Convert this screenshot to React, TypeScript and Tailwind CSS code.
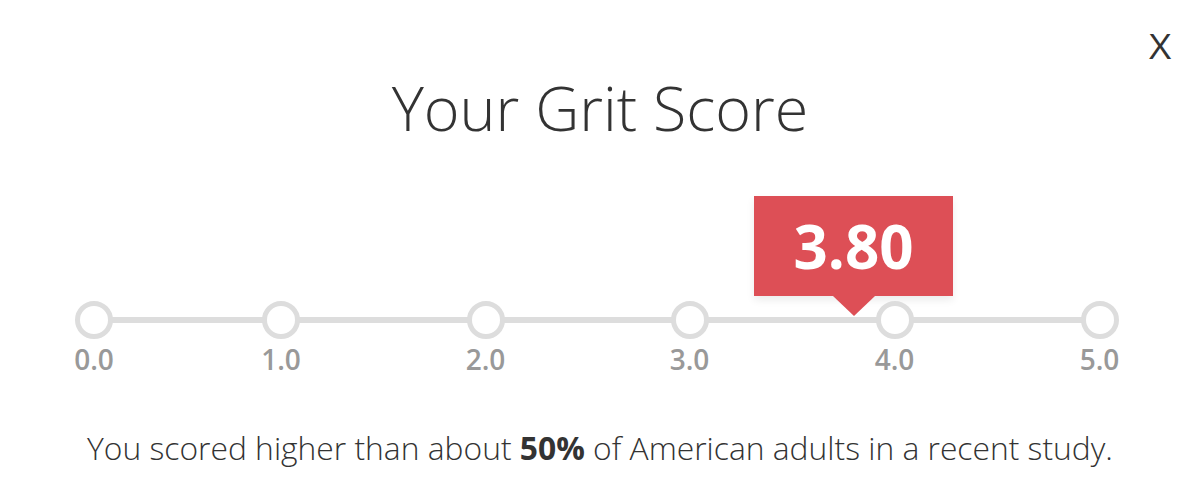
import React from 'react'

const ticks = [
  { label: '0.0', x: 19 },
  { label: '1.0', x: 206 },
  { label: '2.0', x: 410.5 },
  { label: '3.0', x: 614.5 },
  { label: '4.0', x: 819.5 },
  { label: '5.0', x: 1024.5 },
]

const Tick = ({ label, x }: { label: string; x: number }) => (
  <div
    className="absolute top-0 flex w-[80px] -translate-x-1/2 flex-col items-center"
    style={{ left: x }}
  >
    <div className="h-[38px] w-[38px] rounded-full border-[5px] border-[#dddddd] bg-white" />
    <span className="mt-[6px] text-[28px] font-semibold leading-none text-[#999999]">
      {label}
    </span>
  </div>
)

const ScoreBadge = ({ score }: { score: string }) => (
  <div className="absolute left-[679px] top-0 flex flex-col items-center">
    <div className="flex h-[100px] w-[199px] items-center justify-center bg-[#dd4f56] shadow-[0_4px_8px_rgba(0,0,0,0.08)]">
      <span className="text-[60px] font-bold leading-none text-white">{score}</span>
    </div>
    <div className="h-0 w-0 border-x-[21px] border-t-[20px] border-x-transparent border-t-[#dd4f56]" />
  </div>
)

export default function App() {
  return (
    <div
      className="relative h-[498px] w-[1200px] overflow-hidden bg-white text-[#333333]"
      style={{ fontFamily: '"Open Sans", "Noto Sans", sans-serif' }}
    >
      <button className="absolute right-[30px] top-[28px] scale-x-110 text-[35px] font-normal leading-none text-[#333333]">
        X
      </button>

      <h1 className="pt-[77px] text-center text-[61px] font-light leading-none">
        Your Grit Score
      </h1>

      <div className="relative ml-[75px] mt-[58px] h-[190px] w-[1044px]">
        <ScoreBadge score="3.80" />
        <div className="absolute left-[19px] right-[19px] top-[121px] h-[6px] bg-[#dddddd]" />
        <div className="absolute left-0 right-0 top-[105px]">
          {ticks.map((t) => (
            <Tick key={t.label} label={t.label} x={t.x} />
          ))}
        </div>
      </div>

      <p className="mt-[46px] text-center text-[31.8px] font-light leading-none">
        You scored higher than about <strong className="font-bold">50%</strong> of American adults in a recent study.
      </p>
    </div>
  )
}
